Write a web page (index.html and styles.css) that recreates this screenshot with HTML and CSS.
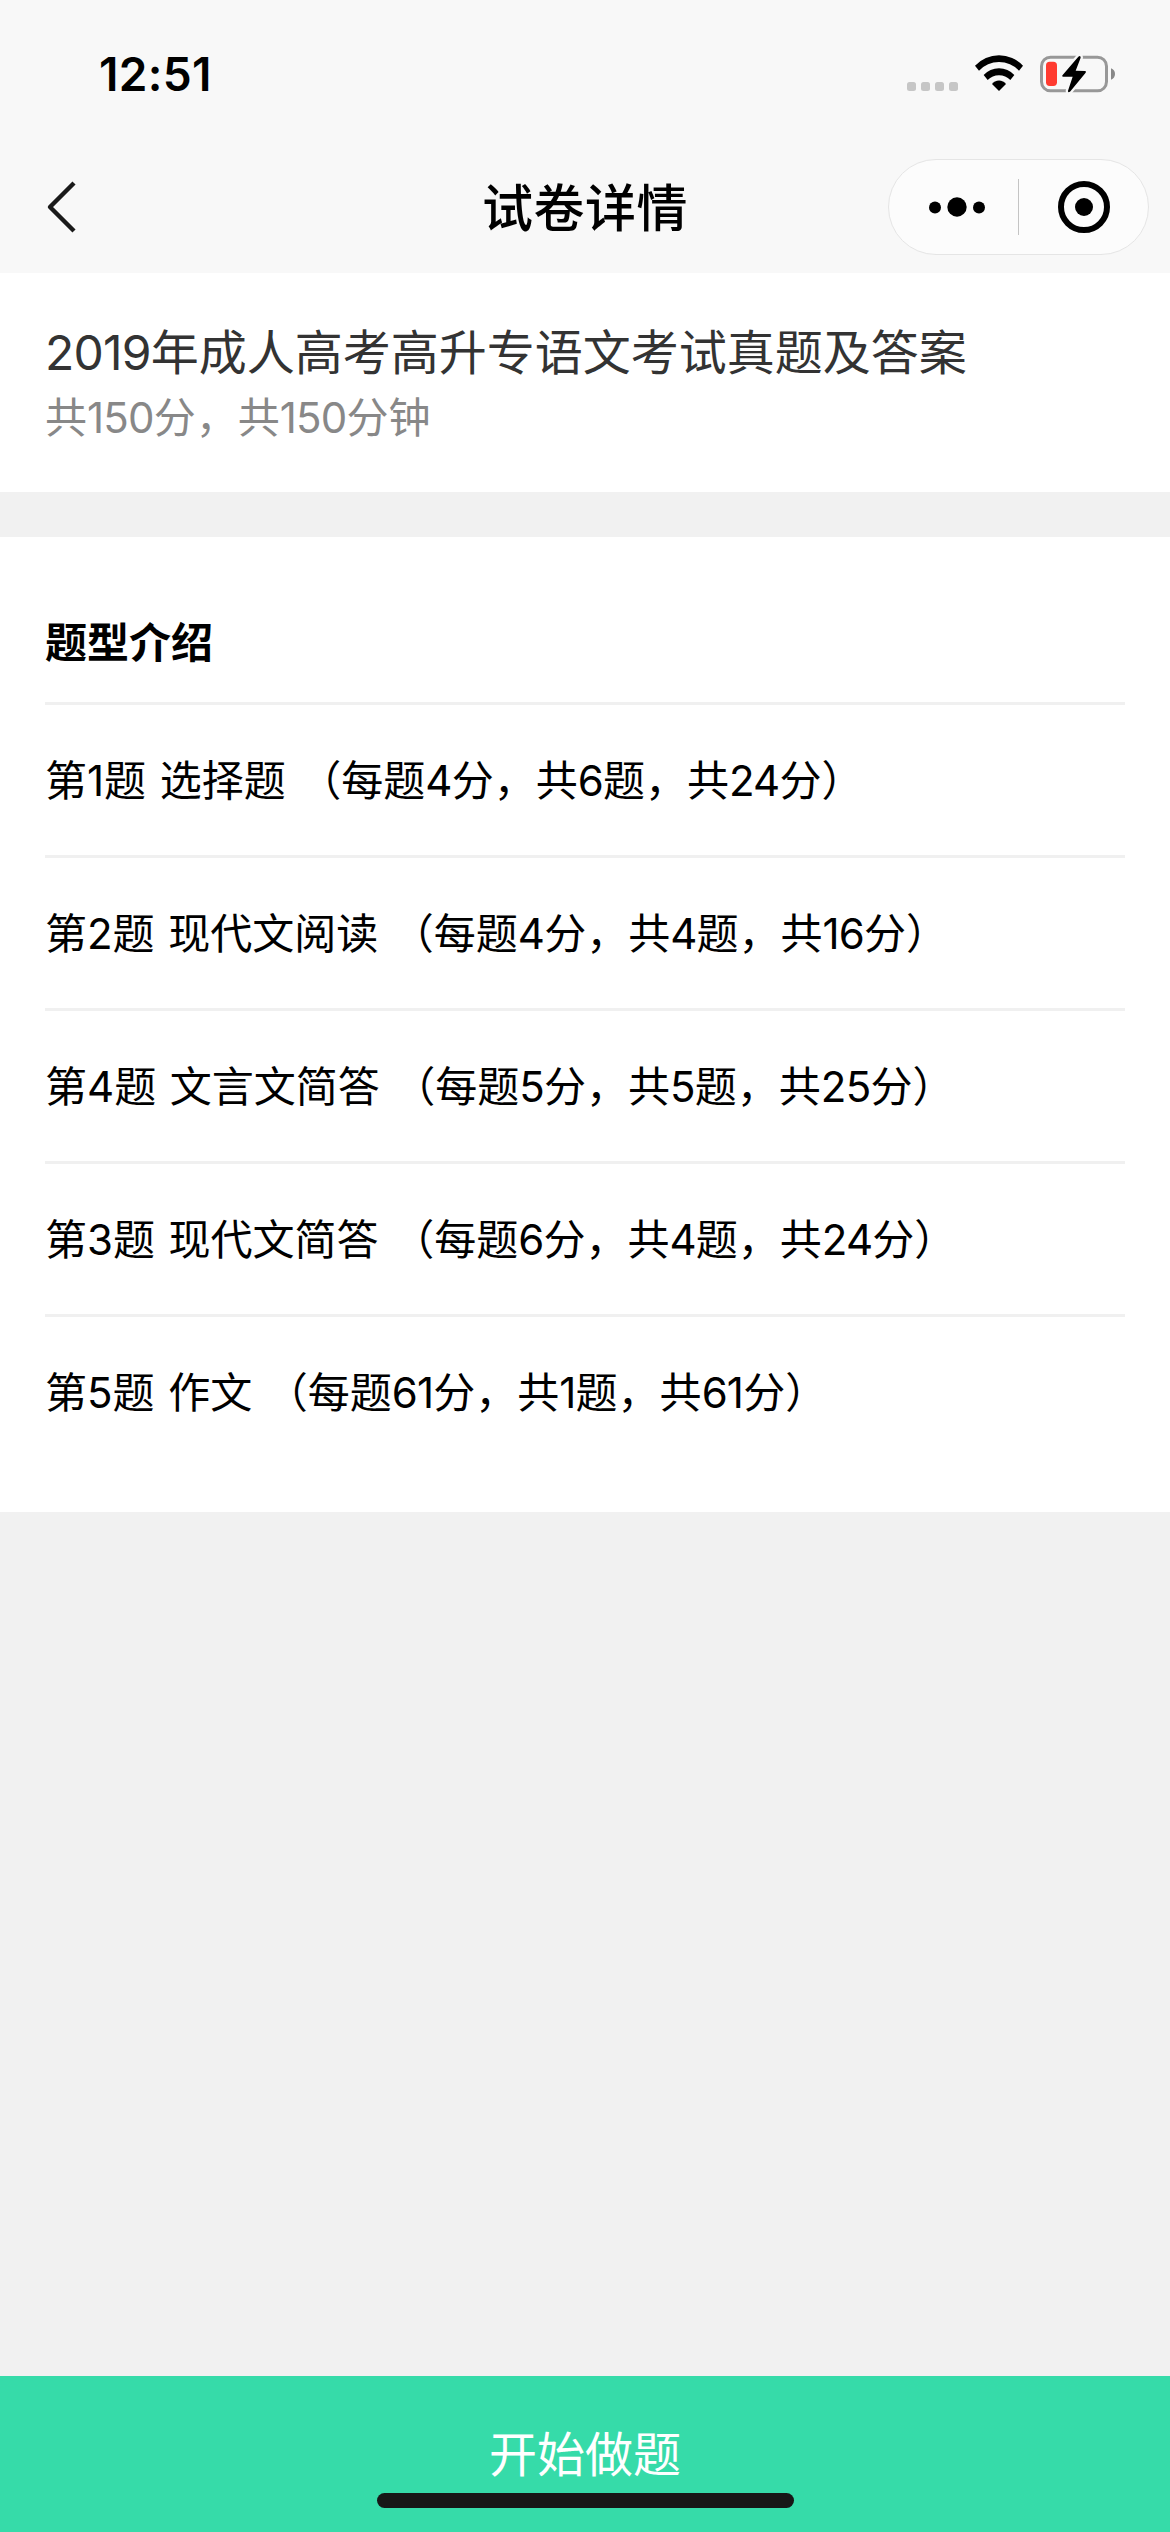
FILE: index.html
```html
<!DOCTYPE html>
<html lang="zh-CN">
<head>
  <meta charset="UTF-8" />
  <meta name="viewport" content="width=device-width, initial-scale=1.0">
  <title>试卷详情</title>
  <link rel="stylesheet" href="styles.css">
</head>
<body>

  <div class="status-bar">
    <div class="time">12:51</div>
    <div class="status-icons">
      <div class="signal"><i></i><i></i><i></i><i></i></div>
      <svg class="wifi" viewBox="0 0 150 114">
        <path d="M3 35A98 98 0 0 1 147 35L135 50A82 82 0 0 0 15 50Z"/>
        <path d="M29 63A62 62 0 0 1 121 63L109 78A48 48 0 0 0 41 78Z"/>
        <path d="M54 90A26 26 0 0 1 96 90L75 111Z"/>
      </svg>
      <svg class="battery" viewBox="0 0 240 132">
        <rect class="battery-body" x="10.5" y="15.5" width="195" height="101" rx="27"/>
        <path class="battery-cap" d="M219 49Q231 54 231 66Q231 78 219 83Z"/>
        <rect class="battery-level" x="24" y="29" width="33" height="73" rx="11"/>
        <path class="bolt" d="M121 14L74 69Q70 74 76 74L104 74L90 116Q89 123 96 119L143 62Q146 57 141 57L113 56L128 17Q128 9 121 14Z"/>
      </svg>
    </div>
  </div>

  <div class="nav-bar">
    <svg class="back" viewBox="0 0 32 54">
      <path d="M28 3L4 27L28 51"/>
    </svg>
    <h1>试卷详情</h1>
    <div class="capsule">
      <svg class="more" viewBox="0 0 56 20">
        <circle cx="6" cy="10.5" r="6"/>
        <circle cx="28" cy="10" r="9.7"/>
        <circle cx="50" cy="10.5" r="6"/>
      </svg>
      <span class="divider"></span>
      <svg class="close" viewBox="0 0 52 52">
        <circle class="ring" cx="26" cy="26" r="23"/>
        <circle cx="26" cy="26" r="9"/>
      </svg>
    </div>
  </div>

  <div class="paper">
    <h2><span class="num">2019</span>年成人高考高升专语文考试真题及答案</h2>
    <p>共<span class="num">150</span>分，共<span class="num">150</span>分钟</p>
  </div>

  <div class="types">
    <h3>题型介绍</h3>
    <ul>
      <li>第1题 选择题 （每题<span class="num">4</span>分，共<span class="num">6</span>题，共<span class="num">24</span>分）</li>
      <li>第2题 现代文阅读 （每题<span class="num">4</span>分，共<span class="num">4</span>题，共<span class="num">16</span>分）</li>
      <li>第4题 文言文简答 （每题<span class="num">5</span>分，共<span class="num">5</span>题，共<span class="num">25</span>分）</li>
      <li>第3题 现代文简答 （每题<span class="num">6</span>分，共<span class="num">4</span>题，共<span class="num">24</span>分）</li>
      <li>第5题 作文 （每题<span class="num">61</span>分，共<span class="num">1</span>题，共<span class="num">61</span>分）</li>
    </ul>
  </div>

  <div class="start-btn">
    开始做题
    <span class="home-indicator"></span>
  </div>

</body>
</html>
```
FILE: styles.css
```css
* {
  margin: 0;
  padding: 0;
  box-sizing: border-box;
}

body {
  background-color: #f1f1f1;
  color: #000;
  font-family: Inter, "Noto Sans CJK SC", sans-serif;
  display: flex;
  flex-direction: column;
  min-height: 100vh;
}

/* Status bar */
.status-bar {
  height: 141px;
  padding: 0 52px 0 99px;
  background: #f8f8f8;
  display: flex;
  justify-content: space-between;
}

.time {
  font-size: 46px;
  font-weight: 600;
  letter-spacing: 0.3px;
  line-height: 56px;
  margin-top: 46px;
}

.status-icons {
  display: flex;
  align-items: flex-start;
}

.signal {
  display: flex;
  gap: 5px;
  margin: 82px 16px 0 0;
}

.signal i {
  width: 9px;
  height: 9px;
  border-radius: 2.5px;
  background: #c6c6c6;
}

.wifi {
  width: 50px;
  height: 38px;
  margin: 54px 14px 0 0;
}

.battery {
  width: 80px;
  height: 44px;
  margin-top: 52px;
}

.battery-body {
  fill: none;
  stroke: #989898;
  stroke-width: 9;
}

.battery-cap {
  fill: #888;
}

.battery-level {
  fill: #ff3b30;
}

.bolt {
  stroke: #f8f8f8;
  stroke-width: 14;
  paint-order: stroke;
}

/* Navigation */
.nav-bar {
  height: 132px;
  padding: 0 21px 0 46px;
  background: #f8f8f8;
  display: grid;
  grid-template-columns: 1fr auto 1fr;
  align-items: center;
}

.back {
  width: 32px;
  height: 54px;
  fill: none;
  stroke: #1a1a1a;
  stroke-width: 4.4;
  stroke-linejoin: round;
}

.nav-bar h1 {
  font-size: 51px;
  font-weight: 500;
  letter-spacing: 0.5px;
  line-height: 72px;
  margin-right: 25px;
  padding-top: 3px;
}

.capsule {
  justify-self: end;
  width: 261px;
  height: 96px;
  padding: 0 38px 0 40px;
  border: 1px solid #e5e5e5;
  border-radius: 48px;
  background: #fcfcfc;
  display: flex;
  align-items: center;
  justify-content: space-between;
}

.more {
  width: 56px;
  height: 20px;
}

.divider {
  width: 1px;
  height: 56px;
  margin-right: 6px;
  background: #c4c4c4;
}

.close {
  width: 52px;
  height: 52px;
}

.ring {
  fill: none;
  stroke: #000;
  stroke-width: 6;
}

/* Paper info */
.paper {
  height: 219px;
  padding: 47px 45px 0;
  margin-bottom: 45px;
  background: #fff;
}

.paper h2 {
  font-size: 48px;
  font-weight: 400;
  line-height: 66px;
  color: #333;
}

.paper p {
  font-size: 42px;
  line-height: 64px;
  color: #888;
}

.num {
  letter-spacing: -0.8px;
}

/* Question types */
.types {
  height: 975px;
  padding: 45px 45px 0;
  background: #fff;
}

.types h3 {
  font-size: 42px;
  font-weight: 700;
  line-height: 118px;
  padding-top: 2px;
}

.types ul {
  list-style: none;
}

.types li {
  height: 153px;
  padding-top: 1px;
  border-top: 3px solid #f0f0f0;
  font-size: 42px;
  line-height: 150px;
  word-spacing: 1.8px;
}

.start-btn {
  position: relative;
  height: 156px;
  margin-top: auto;
  background: #36dba9;
  color: #fff;
  font-size: 48px;
  line-height: 158px;
  text-align: center;
}

.home-indicator {
  position: absolute;
  left: 377px;
  bottom: 24px;
  width: 417px;
  height: 15px;
  border-radius: 8px;
  background: #171717;
}
```
